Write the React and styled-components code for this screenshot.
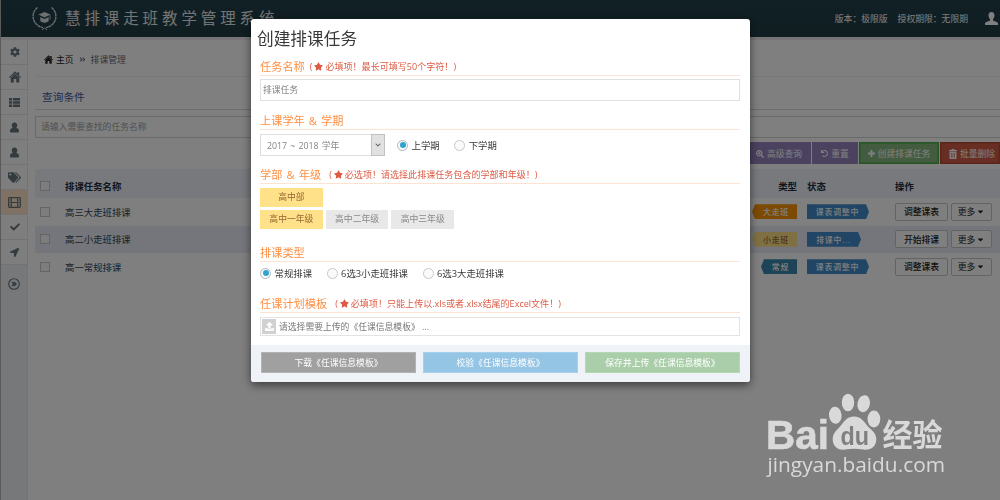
import React, { useState } from "react";
import styled, { createGlobalStyle, css } from "styled-components";
import {
  FaAngleDoubleRight,
  FaCaretDown,
  FaCheck,
  FaChevronDown,
  FaCog,
  FaLocationArrow,
  FaSearchPlus,
  FaStar,
  FaTags,
  FaUndo,
  FaUpload,
} from "react-icons/fa";

const GlobalStyle = createGlobalStyle`
  * {
    box-sizing: border-box;
  }
  body {
    margin: 0;
    overflow: hidden;
    font-family: "Open Sans", "Noto Sans CJK SC", sans-serif;
    font-size: 9.4px;
    color: #393939;
    background: #fff;
  }
  svg {
    display: block;
    flex: none;
  }
`;

const Page = styled.div`
  display: flex;
  flex-direction: column;
  width: 1000px;
  height: 500px;
  overflow: hidden;
  border-left: 1px solid #b4b4b4;
`;

const Header = styled.header`
  display: flex;
  align-items: center;
  flex: none;
  height: 37px;
  padding: 0 2px 0 31px;
  background: linear-gradient(#22404a, #203c44);
  color: #fff;
`;

const Brand = styled.h1`
  margin: 0 0 0 8px;
  font-size: 15.5px;
  font-weight: 400;
  letter-spacing: 3.9px;
  line-height: 37px;
  color: #e6eaeb;
  white-space: nowrap;
`;

const License = styled.div`
  display: flex;
  gap: 10px;
  margin-left: auto;
  margin-right: 17px;
  font-size: 8.8px;
  white-space: nowrap;
`;

const Body = styled.div`
  display: flex;
  flex: 1;
  border-top: 3px solid #ededed;
`;

const Sidebar = styled.nav`
  flex: none;
  width: 27px;
  background: #eef0f4;
  border-right: 1px solid #e8e8e8;
`;

const SideItem = styled.div`
  display: flex;
  align-items: center;
  justify-content: center;
  height: 25px;
  padding-left: 1px;
  border-bottom: 1px solid #e4e4e4;
  background: ${(props) => (props.$active ? "#ffe5c9" : "#fcfcfc")};
  color: #68777f;
`;

const SideToggle = styled.div`
  display: flex;
  justify-content: center;
  padding: 13px 1px 0 0;
  color: #68777f;
`;

const Main = styled.main`
  flex: 1;
  padding-left: 7px;
`;

const Breadcrumb = styled.div`
  display: flex;
  align-items: center;
  gap: 3px;
  height: 37px;
  padding: 3px 0 0 9px;
  border-bottom: 1px solid #f1f1f1;
  font-size: 8.8px;
  color: #222;

  span:last-child {
    color: #5d6b82;
  }
`;

const Divider = styled.span`
  margin: 0 2px 0 2px;
  color: #66718c;
`;

const PanelTitle = styled.h2`
  margin: 0;
  height: 33px;
  padding: 9px 0 0 7px;
  border-bottom: 1px solid #d9d9d9;
  font-size: 10.7px;
  font-weight: 400;
  line-height: 22px;
  color: #3b5ba0;
`;

const SearchBox = styled.div`
  height: 22px;
  margin-top: 6px;
  padding-left: 5px;
  border: 1px solid #d5d5d5;
  border-right: 0;
  font-size: 8.8px;
  line-height: 20px;
  color: #a2a2a2;
`;

const Toolbar = styled.div`
  display: flex;
  justify-content: flex-end;
  gap: 1px;
  height: 22px;
  margin: 4px 0 5px;
`;

const toolTones = {
  purple: css`
    background: #9585bf;
  `,
  green: css`
    background: #87b87f;
    box-shadow: inset 0 0 0 1.5px #49ad49;
  `,
  red: css`
    background: #d15b47;
    box-shadow: inset 0 0 0 1.5px #b84a38;
  `,
};

const ToolButton = styled.div`
  display: flex;
  align-items: center;
  justify-content: center;
  gap: 3px;
  flex: none;
  width: ${(props) => props.$width}px;
  padding-left: ${(props) => props.$inset || 0}px;
  padding-top: 1px;
  color: #fff;
  font-size: 8.8px;
  white-space: nowrap;
  ${(props) => toolTones[props.$tone]}
`;

const Row = styled.div`
  display: grid;
  grid-template-columns: 30px 1fr 60px 98px 105px;
  align-items: center;
  height: ${(props) => (props.$head ? 29 : 27.5)}px;
  background: ${(props) => (props.$head ? "#eff2fb" : props.$striped ? "#eaedf8" : "#fff")};
  font-weight: ${(props) => (props.$head ? 700 : 400)};
  color: ${(props) => (props.$head ? "#222c3c" : "#39434f")};
  padding-top: ${(props) => (props.$head ? 5 : 0)}px;
`;

const Checkbox = styled.span`
  width: 10px;
  height: 10px;
  margin-left: 5px;
  border: 1px solid #c8c8c8;
  background: #fafafa;
`;

const TypeCell = styled.div`
  display: flex;
  justify-content: flex-end;
`;

const StatusCell = styled.div`
  display: flex;
  padding-left: 10px;
`;

const ActionCell = styled.div`
  display: flex;
  gap: 3px;
`;

const Tag = styled.span`
  display: flex;
  align-items: center;
  justify-content: center;
  width: ${(props) => props.$width}px;
  height: 15px;
  padding-left: ${(props) => (props.$point === "left" ? 3 : 0)}px;
  padding-right: ${(props) => (props.$point === "left" ? 0 : 1)}px;
  background: ${(props) => props.$bg};
  color: ${(props) => props.$color || "#fff"};
  font-size: 7.9px;
  font-weight: 500;
  letter-spacing: 0.8px;
  white-space: nowrap;
  clip-path: ${(props) =>
    props.$point === "left"
      ? "polygon(3px 0, 100% 0, 100% 100%, 3px 100%, 0 50%)"
      : "polygon(0 0, calc(100% - 3px) 0, 100% 50%, calc(100% - 3px) 100%, 0 100%)"};
`;

const RowButton = styled.span`
  display: flex;
  align-items: center;
  justify-content: center;
  gap: ${(props) => (props.$bold ? 3 : 1)}px;
  width: ${(props) => props.$width}px;
  height: 18px;
  border: 1px solid #c6c6c6;
  border-radius: 2px;
  background: #fff;
  color: #222;
  font-size: 8.8px;
  font-weight: ${(props) => (props.$bold ? 500 : 400)};
`;

const Backdrop = styled.div`
  position: fixed;
  inset: 0;
  display: flex;
  align-items: flex-start;
  padding: 19px 0 0 251px;
  background: rgba(0, 0, 0, 0.5);
`;

const Dialog = styled.div`
  width: 499px;
  height: 363px;
  display: flex;
  flex-direction: column;
  overflow: hidden;
  background: #fff;
  border-radius: 3px;
  box-shadow: 0 3px 10px rgba(0, 0, 0, 0.55);
`;

const DialogTitle = styled.h3`
  margin: 0;
  padding-left: 6px;
  height: 39px;
  font-size: 16.7px;
  font-weight: 400;
  line-height: 39px;
  color: #393939;
`;

const Form = styled.div`
  flex: 1;
  padding: 0 10px 0 9px;
`;

const Legend = styled.div`
  display: flex;
  align-items: center;
  height: 18px;
  margin-top: ${(props) => props.$top || 0}px;
  padding-bottom: 2px;
  border-bottom: 1px solid #fde3d2;
  font-size: 11.2px;
  word-spacing: 1.2px;
  color: #ff8f43;
  white-space: nowrap;
`;

const Hint = styled.span`
  display: flex;
  align-items: center;
  gap: 2px;
  margin-left: ${(props) => props.$gap}px;
  padding-top: 1px;
  font-size: 9.05px;
  word-spacing: 0;
  color: #dd5a43;
`;

const TextInput = styled.div`
  height: 22px;
  margin-top: 3px;
  padding-left: 2px;
  border: 1px solid #e1e1e1;
  font-size: 8.8px;
  line-height: 20px;
  color: #858585;
`;

const Line = styled.div`
  display: flex;
  align-items: center;
  height: ${(props) => props.$height}px;
  margin-top: ${(props) => props.$top}px;
`;

const Select = styled.div`
  display: flex;
  align-items: center;
  justify-content: space-between;
  width: 125px;
  height: 22px;
  margin-right: 12px;
  padding-left: 6px;
  border: 1px solid #ddd;
  font-size: 8.8px;
  word-spacing: 0.9px;
  color: #858585;
`;

const SelectArrow = styled.span`
  display: flex;
  align-items: center;
  justify-content: center;
  width: 14px;
  height: 22px;
  margin-right: -1px;
  border: 1px solid #c2c2c2;
  background: #e1e1e1;
  color: #666;
`;

const RadioLabel = styled.label`
  display: flex;
  align-items: center;
  gap: 3.5px;
  margin-right: 14.5px;
  font-size: 9.4px;
  color: #393939;
`;

const RadioDot = styled.span`
  display: flex;
  align-items: center;
  justify-content: center;
  width: 11px;
  height: 11px;
  border: 1px solid ${(props) => (props.$checked ? "#adb8c0" : "#c8c8c8")};
  border-radius: 50%;
  background: #fafafa;

  &::after {
    content: "";
    width: 6px;
    height: 6px;
    border-radius: 50%;
    background: ${(props) => (props.$checked ? "#32a3ce" : "transparent")};
  }
`;

const Chips = styled.div`
  display: flex;
  gap: 3px;
  margin-top: ${(props) => props.$top}px;
`;

const Chip = styled.span`
  width: 62.7px;
  height: 19px;
  line-height: 19px;
  text-align: center;
  font-size: 8.8px;
  background: ${(props) => (props.$on ? "#fee188" : "#e8e8e8")};
  color: ${(props) => (props.$on ? "#996633" : "#888")};
`;

const FileInput = styled.div`
  display: flex;
  align-items: center;
  gap: 3px;
  height: 19px;
  margin-top: 4px;
  padding-left: 1px;
  border: 1px solid #e3e3e3;
  font-size: 8.8px;
  color: #777;
`;

const FileIcon = styled.span`
  display: flex;
  align-items: center;
  justify-content: center;
  width: 14px;
  height: 15px;
  background: #d1d1d1;
  color: #fff;
`;

const DialogFooter = styled.div`
  display: flex;
  gap: 7px;
  height: 37px;
  padding: 7px 10px 9px;
  background: #eff3f8;
`;

const FooterButton = styled.button`
  flex: 1;
  padding: 0;
  border: 1px solid ${(props) => props.$edge};
  background: ${(props) => props.$bg};
  color: #fff;
  font-family: inherit;
  font-size: 8.8px;
`;

const Watermark = styled.svg`
  position: fixed;
  left: 760px;
  top: 385px;
`;

const sideIcons = [
  { icon: <FaCog size={10} /> },
  { icon: <HomeIcon size={12} /> },
  { icon: <ListIcon /> },
  { icon: <UserIcon size={11} /> },
  { icon: <UserIcon size={11} /> },
  { icon: <FaTags size={13} /> },
  { icon: <FilmIcon />, active: true },
  { icon: <FaCheck size={10} /> },
  { icon: <FaLocationArrow size={9} /> },
];

const tasks = [
  {
    name: "高三大走班排课",
    type: { text: "大走班", width: 45, bg: "#f89406" },
    status: { text: "课表调整中", width: 62 },
    action: "调整课表",
  },
  {
    name: "高二小走班排课",
    type: { text: "小走班", width: 45, bg: "#fee188", color: "#963" },
    status: { text: "排课中...", width: 54 },
    action: "开始排课",
  },
  {
    name: "高一常规排课",
    type: { text: "常规", width: 36, bg: "#3a87ad" },
    status: { text: "课表调整中", width: 62 },
    action: "调整课表",
  },
];

function HomeIcon({ size }) {
  return (
    <svg width={size} height={size} viewBox="0 0 12 12" fill="currentColor">
      <path d="M6 .3L8.300 2.500V1.200h1.900v3.200L12 6.200l-.8.900L6 2.200.8 7.100 0 6.200z" />
      <path d="M6 2.700l4.300 4.100V11.500H7.200V8H4.800v3.500H1.700V6.800z" />
    </svg>
  );
}

function ListIcon() {
  return (
    <svg width="11" height="9" viewBox="0 0 11 9" fill="currentColor">
      <path d="M0 0h3v2.500H0zM3.800 0H11v2.500H3.800zM0 3.300h3v2.500H0zM3.800 3.300H11v2.500H3.800zM0 6.500h3V9H0zM3.800 6.500H11V9H3.800z" />
    </svg>
  );
}

function FilmIcon() {
  return (
    <svg width="13" height="11" viewBox="0 0 13 11" fill="none" stroke="currentColor">
      <rect x=".6" y=".6" width="11.800" height="9.800" rx=".8" strokeWidth="1.100" />
      <path d="M3.400.5v10M9.600.5v10M3.400 5.500h6.200" />
      <path d="M.8 3h2.400M.8 5.500h2.400M.8 8h2.400M9.800 3h2.400M9.800 5.500h2.400M9.800 8h2.400" strokeWidth=".8" />
    </svg>
  );
}

function PlusIcon() {
  return (
    <svg width="7" height="7" viewBox="0 0 7 7" fill="currentColor">
      <path d="M2.500 0h2v2.500H7v2H4.500V7h-2V4.500H0v-2h2.500z" />
    </svg>
  );
}

function UserIcon({ size }) {
  return (
    <svg width={size} height={size} viewBox="0 0 12 12" fill="currentColor">
      <path d="M6 .5c1.8 0 3 1.3 3 3.1 0 1.2-.5 2.2-1.2 2.9C9.8 6.8 11 8 11 10.2c0 .8-.5 1.3-1.2 1.3H2.2C1.5 11.500 1 11 1 10.2 1 8 2.200 6.800 4.200 6.500 3.500 5.800 3 4.800 3 3.600 3 1.800 4.200.500 6 .500z" />
    </svg>
  );
}

function AccountIcon() {
  return (
    <svg width="13" height="13" viewBox="0 0 13 13" fill="#fff">
      <path d="M6.500 0C8.500 0 9.700 1.500 9.500 3.600 9.400 5.300 8.700 6.400 8 7.100v1.300l3.600 1.500c.9.400 1.400 1 1.400 2V13H0v-1.100c0-1 .5-1.600 1.400-2L5 8.400V7.100C4.300 6.400 3.600 5.300 3.500 3.600 3.300 1.500 4.500 0 6.500 0z" />
    </svg>
  );
}

function TrashIcon() {
  return (
    <svg width="8" height="10" viewBox="0 0 8 10" fill="currentColor">
      <path
        fillRule="evenodd"
        d="M2.500 0h3v1H8v1.200H0V1h2.500zM.5 2.800h7V10h-7zM2 4v4.800h.6V4zm1.700 0v4.800h.6V4zm1.700 0v4.800H6V4z"
      />
    </svg>
  );
}

function Emblem() {
  return (
    <svg width="25" height="25" viewBox="0 0 25 25" fill="none" stroke="#dce3e4">
      <path d="M5.500 1.500C1.500 4.500.2 9.500 1.700 14c1.400 4 4.900 6.900 9.200 7.500M19.500 1.500c4 3 5.300 8 3.800 12.500-1.400 4-4.900 6.900-9.200 7.500" strokeWidth="1.300" strokeDasharray="3 .5" />
      <path d="M10 24l2.500-2.200L15 24" />
      <path d="M12.500 6l6 2.600-6 2.800-6-2.800z" fill="#dce3e4" stroke="none" />
      <path d="M8.300 11l4.200 2 4.200-2v4c-2.300 2.200-6.100 2.200-8.400 0z" fill="#dce3e4" stroke="none" />
      <path d="M18 9v4.500" strokeWidth=".8" />
    </svg>
  );
}

function ToggleIcon() {
  return (
    <svg width="12" height="12" viewBox="0 0 12 12" fill="none" stroke="currentColor">
      <circle cx="6" cy="6" r="5.300" strokeWidth="1.100" />
      <path d="M4 4L6 6 4 8M6 4L8 6 6 8" strokeWidth="1.400" />
    </svg>
  );
}

function BaiduMark() {
  return (
    <Watermark width="200" height="110" viewBox="0 0 200 110" fill="#d9d9d9">
      <g fontFamily="Liberation Sans, sans-serif" fontWeight="700">
        <text x="6" y="63.500" fontSize="41" textLength="63" lengthAdjust="spacingAndGlyphs" stroke="#d9d9d9" strokeWidth=".6">
          Bai
        </text>
        <ellipse cx="75.300" cy="30.300" rx="6.300" ry="8.500" transform="rotate(-6 75.300 30.300)" />
        <ellipse cx="88" cy="17.500" rx="6.200" ry="8.800" />
        <ellipse cx="103.700" cy="18.700" rx="6.200" ry="8.600" transform="rotate(12 103.700 18.700)" />
        <ellipse cx="113.900" cy="34" rx="6.400" ry="8.400" />
        <path d="M94 31.500c6.500 0 9.500 4.300 12.500 8.300 3.500 4.500 9.800 7.700 9.800 14.200 0 8-6 11.700-13 10.500-6.500-1-12-1-18.500 0C78 65.700 72.700 61.500 72.700 54c0-6.500 5.600-9.800 8.800-14.200 3-4 6-8.300 12.500-8.300z" />
        <text x="80.500" y="59.500" fontSize="26" fill="#808080" textLength="28.500" lengthAdjust="spacingAndGlyphs">
          du
        </text>
      </g>
      <text x="122.500" y="61" fontSize="31" fontWeight="700" fontFamily="Noto Sans CJK SC, sans-serif" textLength="60" lengthAdjust="spacingAndGlyphs">
        经验
      </text>
      <text x="7.500" y="86.500" fontSize="20" fontFamily="Open Sans, sans-serif" fontWeight="500" textLength="177.500" lengthAdjust="spacingAndGlyphs">
        jingyan.baidu.com
      </text>
    </Watermark>
  );
}

function RadioGroup({ options }) {
  const [value, setValue] = useState(options[0]);
  return options.map((option) => (
    <RadioLabel key={option} onClick={() => setValue(option)}>
      <RadioDot $checked={option === value} />
      {option}
    </RadioLabel>
  ));
}

function Section({ title, hint, hintGap, top }) {
  return (
    <Legend $top={top}>
      {title}
      {hint && (
        <Hint $gap={hintGap}>
          (<FaStar size={9} />
          {hint}
        </Hint>
      )}
    </Legend>
  );
}

function CreateTaskDialog() {
  return (
    <Backdrop>
      <Dialog>
        <DialogTitle>创建排课任务</DialogTitle>
        <Form>
          <Section title="任务名称" hint="必填项！最长可填写50个字符！)" hintGap={5} />
          <TextInput>排课任务</TextInput>

          <Section title="上课学年 & 学期" top={11} />
          <Line $height={22} $top={4}>
            <Select>
              2017 ~ 2018 学年
              <SelectArrow>
                <FaChevronDown size={6} />
              </SelectArrow>
            </Select>
            <RadioGroup options={["上学期", "下学期"]} />
          </Line>

          <Section title="学部 & 年级" hint="必选项！请选择此排课任务包含的学部和年级！)" hintGap={8} top={10} />
          <Chips $top={4}>
            <Chip $on>高中部</Chip>
          </Chips>
          <Chips $top={3}>
            <Chip $on>高中一年级</Chip>
            <Chip>高中二年级</Chip>
            <Chip>高中三年级</Chip>
          </Chips>

          <Section title="排课类型" top={15} />
          <Line $height={14} $top={4}>
            <RadioGroup options={["常规排课", "6选3小走班排课", "6选3大走班排课"]} />
          </Line>

          <Section title="任课计划模板" hint="必填项！只能上传以.xls或者.xlsx结尾的Excel文件！)" hintGap={8} top={15} />
          <FileInput>
            <FileIcon>
              <FaUpload size={9} />
            </FileIcon>
            请选择需要上传的《任课信息模板》 ...
          </FileInput>
        </Form>
        <DialogFooter>
          <FooterButton $bg="#a0a0a0" $edge="#b3b3b3">下载《任课信息模板》</FooterButton>
          <FooterButton $bg="#95c5e5" $edge="#a5d0eb">校验《任课信息模板》</FooterButton>
          <FooterButton $bg="#aaceaa" $edge="#b2d9b2">保存并上传《任课信息模板》</FooterButton>
        </DialogFooter>
      </Dialog>
    </Backdrop>
  );
}

function App() {
  return (
    <>
      <GlobalStyle />
      <Page>
        <Header>
          <Emblem />
          <Brand>慧排课走班教学管理系统</Brand>
          <License>
            <span>版本：极限版</span>
            <span>授权期限：无限期</span>
          </License>
          <AccountIcon />
        </Header>
        <Body>
          <Sidebar>
            {sideIcons.map((item, i) => (
              <SideItem key={i} $active={item.active}>
                {item.icon}
              </SideItem>
            ))}
            <SideToggle>
              <ToggleIcon />
            </SideToggle>
          </Sidebar>
          <Main>
            <Breadcrumb>
              <HomeIcon size={9} />
              <span>主页</span>
              <Divider>
                <FaAngleDoubleRight size={7} />
              </Divider>
              <span>排课管理</span>
            </Breadcrumb>
            <PanelTitle>查询条件</PanelTitle>
            <SearchBox>请输入需要查找的任务名称</SearchBox>
            <Toolbar>
              <ToolButton $tone="purple" $width={64}>
                <FaSearchPlus size={8} />
                高级查询
              </ToolButton>
              <ToolButton $tone="purple" $width={46}>
                <FaUndo size={7} />
                重置
              </ToolButton>
              <ToolButton $tone="green" $width={80}>
                <PlusIcon />
                创建排课任务
              </ToolButton>
              <ToolButton $tone="red" $width={60} $inset={4}>
                <TrashIcon />
                批量删除
              </ToolButton>
            </Toolbar>
            <Row $head>
              <Checkbox />
              <span>排课任务名称</span>
              <TypeCell>类型</TypeCell>
              <StatusCell>状态</StatusCell>
              <ActionCell>操作</ActionCell>
            </Row>
            {tasks.map((task, i) => (
              <Row key={task.name} $striped={i % 2 === 1}>
                <Checkbox />
                <span>{task.name}</span>
                <TypeCell>
                  <Tag $point="left" $width={task.type.width} $bg={task.type.bg} $color={task.type.color}>
                    {task.type.text}
                  </Tag>
                </TypeCell>
                <StatusCell>
                  <Tag $width={task.status.width} $bg="#428bca">
                    {task.status.text}
                  </Tag>
                </StatusCell>
                <ActionCell>
                  <RowButton $width={53} $bold>
                    {task.action}
                  </RowButton>
                  <RowButton $width={41}>
                    更多 <FaCaretDown size={9} />
                  </RowButton>
                </ActionCell>
              </Row>
            ))}
          </Main>
        </Body>
      </Page>
      <CreateTaskDialog />
      <BaiduMark />
    </>
  );
}

export default App;
